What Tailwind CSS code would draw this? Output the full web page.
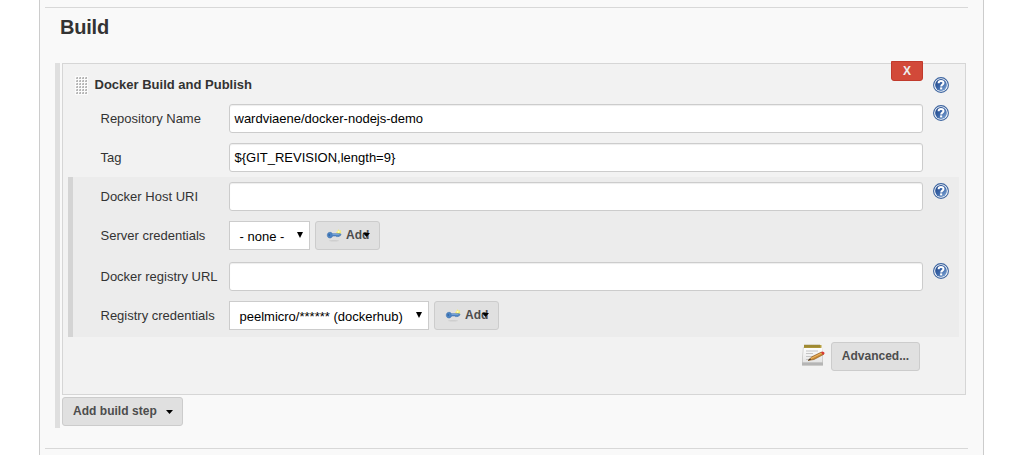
<!DOCTYPE html>
<html lang="en">
<head>
<meta charset="utf-8">
<title>Build</title>
<script src="https://cdn.jsdelivr.net/npm/@tailwindcss/browser@4"></script>
</head>
<body class="h-[455px] overflow-hidden bg-white font-['Liberation_Sans',Arial,sans-serif] text-[13px] leading-[15px] text-[#333]">
<svg class="absolute size-0">
  <defs>
    <linearGradient id="blue" x1="0" y1="0" x2="1" y2="1"><stop offset="0" stop-color="#1d4386"/><stop offset=".5" stop-color="#3b66a8"/><stop offset="1" stop-color="#8db2dd"/></linearGradient>
    <linearGradient id="paper" x1="0" y1="0" x2="0" y2="1"><stop offset="0" stop-color="#fff"/><stop offset="1" stop-color="#e4e4e4"/></linearGradient>
    <pattern id="dots" width="3" height="3" patternUnits="userSpaceOnUse"><rect width="3" height="3" fill="#fbfbfb"/><rect x="1" y="1" width="1" height="1" fill="#d0d0d0"/><rect x="2" y="1" width="1" height="1" fill="#b0b0b0"/><rect x="1" y="2" width="1" height="1" fill="#b8b8b8"/><rect x="2" y="2" width="1" height="1" fill="#b8b8b8"/></pattern>
    <symbol id="help" viewBox="0 0 16 16">
      <circle cx="8" cy="8" r="7.400" fill="#fff" stroke="#3c649f" stroke-width="1.100"/>
      <circle cx="8" cy="8" r="5.900" fill="url(#blue)"/>
      <path d="M5.600 6.300C5.600 4.700 6.500 4 8 4s2.500.8 2.500 2c0 1.600-2.300 1.700-2.300 3.400" fill="none" stroke="#fff" stroke-width="2"/>
      <rect x="7.100" y="10.400" width="2.100" height="2" fill="#fff"/>
    </symbol>
    <symbol id="key" viewBox="0 0 16 16">
      <ellipse cx="8" cy="12.700" rx="5" ry=".8" fill="#cdcdcd"/>
      <path d="M12.300 1.200l1 1.500 1.800-.5-.6 1.700 1 1.300-1.700.3-1.300 1.300-.9-1.600-1.700-.4 1.300-1.100z" fill="#f7ec62"/>
      <circle cx="12.600" cy="3.800" r="1.100" fill="#fffbb5"/>
      <path d="M2 5.100C3.200 3.900 5.500 4 6.500 5.700h7.900l.6 1-.7 1h-.9l-.4 1.200-.9-.8-1 1-1-1.100H6.700C5.800 10.200 3.300 10.500 2 9.300 1 8.300 1 6.200 2 5.100z" fill="#4b83c3" stroke="#3b6eaa" stroke-width=".5"/>
      <path d="M6.500 6.600h7" stroke="#85addb" stroke-width=".8"/>
      <circle cx="3.200" cy="7" r=".8" fill="#2e5b94"/>
    </symbol>
  </defs>
</svg>
<main class="ml-[39px] h-[455px] w-[945px] border-x border-[#ccc] bg-[#f9f9f9] pl-[5px] pr-[15px] pt-[7px]">
  <div class="h-px bg-[#d8d8d8]"></div>
  <h2 class="ml-[15px] mt-[7px] h-[48px] text-[20px] font-bold leading-[24px] tracking-[-0.2px] text-[#333]">Build</h2>
  <div class="ml-[10px] flex h-[365px] w-[911px] border-l-[5px] border-[#dfdfdf] pl-[2px]">
    <div>
      <section class="relative h-[332px] w-[904px] border border-[#d6d6d6] bg-[#f2f2f2]">
        <button class="absolute left-[828px] top-[-3px] h-5 w-8 rounded-b-[3px] border border-[#c13a2c] bg-[#d24939] text-[12px] font-bold leading-[18px] text-[#eee]">X</button>
        <div class="flex h-[36px] items-start">
          <svg class="ml-[12px] mt-[12px] h-[19px] w-[13px]" viewBox="0 0 13 19"><rect width="13" height="19" fill="url(#dots)"/></svg>
          <h3 class="ml-[6.500px] mt-[13px] w-[775.500px] whitespace-nowrap text-[13px] font-bold">Docker Build and Publish</h3>
          <svg class="ml-[63px] mt-[13px] size-4"><use href="#help"/></svg>
        </div>
        <div class="flex h-[39px] items-start pl-[37.500px] pt-1">
          <label class="mt-[7px] w-[128.500px]">Repository Name</label>
          <div class="h-[29px] w-[694px] rounded-[3px] border border-[#ccc] bg-white pl-[4.500px] leading-[27px] text-black shadow-[inset_0_1px_1px_#eee]">wardviaene/docker-nodejs-demo</div>
          <svg class="ml-[10px] mt-px size-4"><use href="#help"/></svg>
        </div>
        <div class="flex h-[38px] items-start pl-[37.500px] pt-1">
          <label class="mt-[7px] w-[128.500px]">Tag</label>
          <div class="h-[29px] w-[694px] rounded-[3px] border border-[#ccc] bg-white pl-[4.500px] leading-[27px] text-black shadow-[inset_0_1px_1px_#eee]">${GIT_REVISION,length=9}</div>
        </div>
        <div class="ml-[5px] h-[160px] w-[891px] border-l-[5px] border-[#d4d4d4] bg-[#ececec] pl-[27.500px] pt-[5px]">
          <div class="flex h-[39px] items-start">
            <label class="mt-[7px] w-[128.500px]">Docker Host URI</label>
            <div class="h-[29px] w-[694px] rounded-[3px] border border-[#ccc] bg-white shadow-[inset_0_1px_1px_#eee]"></div>
            <svg class="ml-[10px] mt-px size-4"><use href="#help"/></svg>
          </div>
          <div class="flex h-[41px] items-start">
            <label class="mt-[7px] w-[128.500px]">Server credentials</label>
            <div class="flex h-[29px] w-[81px] justify-between border border-[#ccc] bg-white pl-[9.500px] pr-[6px] leading-[29px] text-black">- none -<svg class="mt-[10px] h-[6px] w-[6px]" viewBox="0 0 6 6"><path d="M0 0h6L3 6z"/></svg></div>
            <button class="ml-[5px] flex h-[29px] w-[65px] items-start rounded-[3px] border border-[#ccc] bg-[#e0e0e0] pl-[10px] text-[12px] font-bold leading-[26px] text-[#4d4d4d]"><svg class="mt-[6px] size-4"><use href="#key"/></svg><span class="ml-[4px] w-[17px]">Add</span><svg class="mt-[11px] h-1 w-[7px]" viewBox="0 0 7 4"><path d="M0 0h7L3.500 4z" fill="#000"/></svg></button>
          </div>
          <div class="flex h-[39px] items-start">
            <label class="mt-[7px] w-[128.500px] whitespace-nowrap">Docker registry URL</label>
            <div class="h-[29px] w-[694px] rounded-[3px] border border-[#ccc] bg-white shadow-[inset_0_1px_1px_#eee]"></div>
            <svg class="ml-[10px] mt-px size-4"><use href="#help"/></svg>
          </div>
          <div class="flex items-start">
            <label class="mt-[7px] w-[128.500px] whitespace-nowrap">Registry credentials</label>
            <div class="flex h-[29px] w-[200px] justify-between border border-[#ccc] bg-white pl-[9.500px] pr-[6px] leading-[29px] text-black">peelmicro/****** (dockerhub)<svg class="mt-[10px] h-[6px] w-[6px]" viewBox="0 0 6 6"><path d="M0 0h6L3 6z"/></svg></div>
            <button class="ml-[5px] flex h-[29px] w-[65px] items-start rounded-[3px] border border-[#ccc] bg-[#e0e0e0] pl-[10px] text-[12px] font-bold leading-[26px] text-[#4d4d4d]"><svg class="mt-[6px] size-4"><use href="#key"/></svg><span class="ml-[4px] w-[17px]">Add</span><svg class="mt-[11px] h-1 w-[7px]" viewBox="0 0 7 4"><path d="M0 0h7L3.500 4z" fill="#000"/></svg></button>
          </div>
        </div>
        <div class="flex items-start justify-end pr-[45px] pt-[5px]">
          <svg class="mr-[6px] mt-px h-6 w-6" viewBox="0 0 24 24">
            <path d="M2 4h19l1 18.500H1z" fill="#b3b3b0"/>
            <path d="M2.500 4h18.500l.3 15.500H1.700z" fill="url(#paper)"/>
            <path d="M1.300 21h20.500" stroke="#b5b5b5" stroke-width="2.500"/>
            <path d="M3 2h17.500v3H3z" fill="#b8a142"/>
            <path d="M4 1.500v3m2-3v3m2-3v3m2-3v3m2-3v3m2-3v3m2-3v3m2-3v3" stroke="#786720" stroke-width=".8"/>
            <path d="M5 8h12M5 10.500h7M5 13.500h8M5 16.500h4" stroke="#c5c5c5"/>
            <path d="M7 17.500l4-3.800L20.500 9l2 2.500-9.500 5z" fill="#c98a33" stroke="#865218" stroke-width=".6"/>
            <path d="M10 15.500L21 10" stroke="#efb969" stroke-width="1"/>
            <path d="M7 17.500l2-1.900.9 1.200z" fill="#333"/>
            <path d="M20 9.200l1.500-.8 1.700.8.300 1.500-1.600 1.200z" fill="#d83b35"/>
          </svg>
          <button class="flex h-[29px] w-[89px] justify-center rounded-[3px] border border-[#ccc] bg-[#e0e0e0] text-[12px] font-bold leading-[26px] text-[#4d4d4d]">Advanced...</button>
        </div>
      </section>
      <button class="mt-[2px] flex h-[29px] w-[121px] items-start rounded-[3px] border border-[#ccc] bg-[#e0e0e0] pl-[10px] text-[12px] font-bold leading-[26px] text-[#4d4d4d]"><span class="w-[93px] text-left tracking-[0.03px]">Add build step</span><svg class="mt-[12px] h-1 w-[7px]" viewBox="0 0 7 4"><path d="M0 0h7L3.500 4z" fill="#000"/></svg></button>
    </div>
  </div>
  <div class="mt-[20px] h-px bg-[#d8d8d8]"></div>
</main>
</body>
</html>
